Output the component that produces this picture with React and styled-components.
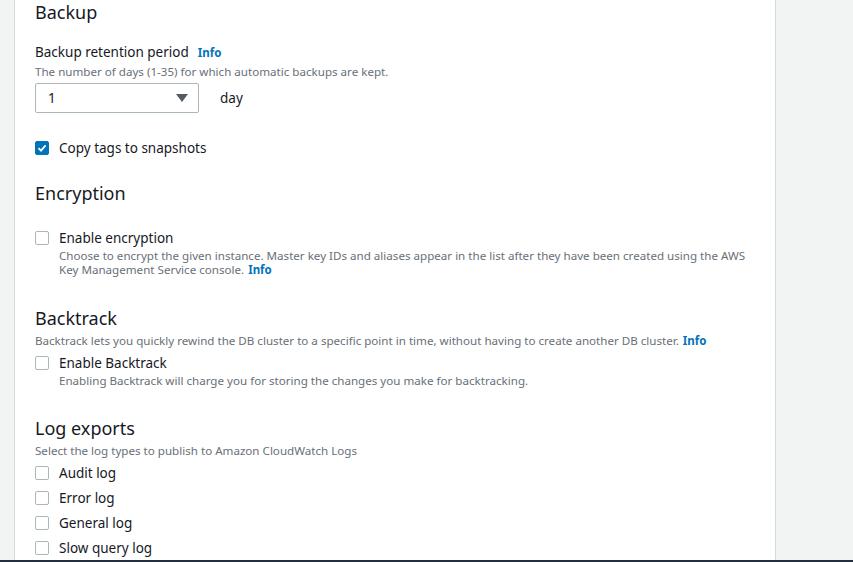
import React from "react";
import styled, { createGlobalStyle } from "styled-components";

const GlobalStyle = createGlobalStyle`
  html, body {
    margin: 0;
    padding: 0;
    background: #f2f3f3;
    font-family: "Noto Sans", "Open Sans", Arial, sans-serif;
    color: #16191f;
  }
`;

const Page = styled.div`
  display: flex;
  height: 560px;
  border-bottom: 2px solid #232f3e;
  overflow: hidden;
  background: #f2f3f3;
`;

const Gutter = styled.div`
  width: 14px;
  flex: none;
`;

const Panel = styled.div`
  width: 762px;
  flex: none;
  background: #fff;
  border-left: 1px solid #d5dbdb;
  border-right: 1px solid #d5dbdb;
  box-sizing: border-box;
  padding: 0 20px;
`;

const Section = styled.section`
  padding-top: ${(p) => p.top || 0}px;
`;

const Heading = styled.h2`
  margin: 0;
  font-size: 18px;
  font-weight: 400;
  line-height: 24px;
`;

const Label = styled.div`
  font-size: 13.5px;
  line-height: 20px;
  margin-top: 18px;
`;

const Info = styled.a`
  color: #0073bb;
  font-weight: 700;
  font-size: 11.5px;
  margin-left: ${(p) => p.gap ?? 9}px;
  text-decoration: none;
`;

const Desc = styled.div`
  color: #687078;
  font-size: 11.6px;
  line-height: 14px;
  white-space: nowrap;
  margin-top: ${(p) => p.mt || 0}px;
  padding-left: ${(p) => (p.indent ? 24 : 0)}px;
`;

const SelectRow = styled.div`
  display: flex;
  align-items: center;
  margin-top: 4px;
`;

const Select = styled.div`
  width: 164px;
  height: 30px;
  box-sizing: border-box;
  border: 1px solid #aab7b8;
  border-radius: 2px;
  display: flex;
  align-items: center;
  justify-content: space-between;
  padding: 0 10px 0 12px;
  font-size: 13.5px;
`;

const Caret = styled.span`
  width: 0;
  height: 0;
  border-left: 6px solid transparent;
  border-right: 6px solid transparent;
  border-top: 8px solid #545b64;
`;

const Unit = styled.span`
  font-size: 13.5px;
  margin-left: 21px;
`;

const CheckRow = styled.label`
  display: flex;
  align-items: center;
  gap: 10px;
  font-size: 13.5px;
  line-height: 20px;
  margin-top: ${(p) => p.mt || 0}px;
`;

const Box = styled.span`
  width: 14px;
  height: 14px;
  box-sizing: border-box;
  border-radius: 2px;
  border: 1px solid ${(p) => (p.checked ? "#0073bb" : "#aab7b8")};
  background: ${(p) => (p.checked ? "#0073bb" : "#fff")};
  display: flex;
  align-items: center;
  justify-content: center;
  flex: none;
`;

const Check = ({ checked, label, mt }) => (
  <CheckRow mt={mt}>
    <Box checked={checked}>
      {checked && (
        <svg width="10" height="10" viewBox="0 0 10 10">
          <path d="M1.5 5.2 L4 7.6 L8.6 2.4" fill="none" stroke="#fff" strokeWidth="1.8" />
        </svg>
      )}
    </Box>
    {label}
  </CheckRow>
);

const LogList = styled.div`
  display: flex;
  flex-direction: column;
  gap: 5px;
  margin-top: 5px;
`;

export default function App() {
  return (
    <>
      <GlobalStyle />
      <Page>
        <Gutter />
        <Panel>
          <Section top={0}>
            <Heading>Backup</Heading>
            <Label>
              Backup retention period<Info>Info</Info>
            </Label>
            <Desc mt={2}>The number of days (1-35) for which automatic backups are kept.</Desc>
            <SelectRow>
              <Select>
                1<Caret />
              </Select>
              <Unit>day</Unit>
            </SelectRow>
            <Check checked label="Copy tags to snapshots" mt={25} />
          </Section>
          <Section top={23}>
            <Heading>Encryption</Heading>
            <Check label="Enable encryption" mt={23} />
            <Desc indent mt={1}>
              Choose to encrypt the given instance. Master key IDs and aliases appear in the list after they have been created using the AWS
              <br />
              Key Management Service console.<Info gap={4}>Info</Info>
            </Desc>
          </Section>
          <Section top={29}>
            <Heading>Backtrack</Heading>
            <Desc mt={4}>
              Backtrack lets you quickly rewind the DB cluster to a specific point in time, without having to create another DB cluster.
              <Info gap={4}>Info</Info>
            </Desc>
            <Check label="Enable Backtrack" mt={5} />
            <Desc indent mt={1}>Enabling Backtrack will charge you for storing the changes you make for backtracking.</Desc>
          </Section>
          <Section top={28}>
            <Heading>Log exports</Heading>
            <Desc mt={4}>Select the log types to publish to Amazon CloudWatch Logs</Desc>
            <LogList>
              <Check label="Audit log" />
              <Check label="Error log" />
              <Check label="General log" />
              <Check label="Slow query log" />
            </LogList>
          </Section>
        </Panel>
      </Page>
    </>
  );
}
